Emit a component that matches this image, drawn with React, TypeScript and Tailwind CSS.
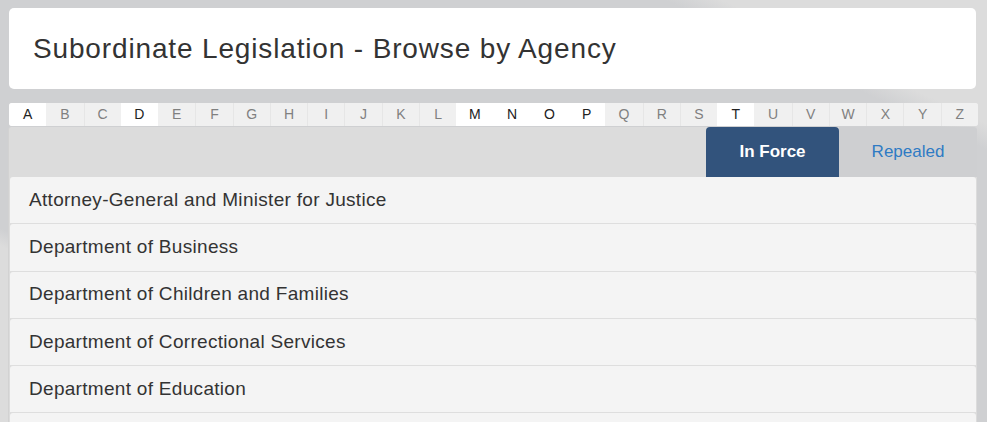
const letters = "ABCDEFGHIJKLMNOPQRSTUVWXYZ".split("");
const active = ["A", "D", "M", "N", "O", "P", "T"];

const agencies = [
  "Attorney-General and Minister for Justice",
  "Department of Business",
  "Department of Children and Families",
  "Department of Correctional Services",
  "Department of Education",
];

export default function App() {
  return (
    <div className="w-[987px] h-[422px] overflow-hidden bg-[linear-gradient(205deg,#dcdcdc_0%,#dcdcdc_14%,#cfd0d2_17%,#cfd0d2_78%,#dcdcdc_80%)] font-['Liberation_Sans',Arial,sans-serif] text-[#333]">
      <div className="pt-[8px] pl-[9px] pr-[9px]">
        <div className="w-[967px] h-[81px] bg-white rounded-[5px] flex items-center pl-[24px]">
          <h1 className="text-[28px] leading-none tracking-[0.85px] text-[#333]">
            Subordinate Legislation - Browse by Agency
          </h1>
        </div>

        <div className="mt-[14px] h-[23px] grid grid-cols-26 rounded-[3px] overflow-hidden bg-[#f0f0f0]">
          {letters.map((l, i) => {
            const on = active.includes(l);
            return (
              <div
                key={l}
                className={`flex items-center justify-center text-[14px] ${
                  on ? "bg-white text-[#222]" : "bg-[#f0f0f0] text-[#808080]"
                } ${i > 0 && !on && !active.includes(letters[i - 1]) ? "border-l border-[#e6e6e6]" : ""}`}
              >
                {l}
              </div>
            );
          })}
        </div>
      </div>

      <div className="ml-[8px] mt-[1px] w-[969px] bg-[#dcdcdc] border-l border-[#d2d2d2] rounded-t-[3px]">
        <div className="h-[50px] flex justify-end">
          <div className="w-[133px] h-full bg-[#32537c] rounded-t-[4px] flex items-center justify-center text-white font-bold text-[17px]">
            In Force
          </div>
          <div className="w-[138px] h-full bg-[#cecfd1] rounded-tr-[3px] flex items-center justify-center text-[#2e7bc4] text-[17px]">
            Repealed
          </div>
        </div>
        <div className="pl-[1px] pr-[1px]">
          {agencies.map((a) => (
            <div
              key={a}
              className="h-[47.3px] bg-[#f4f4f4] border-b border-[#dedede] rounded-t-[3px] flex items-center pl-[19px] text-[19px] tracking-[0.3px] text-[#333]"
            >
              {a}
            </div>
          ))}
          <div className="h-[47.3px] bg-[#f4f4f4] border-b border-[#dedede] rounded-t-[3px]" />
        </div>
      </div>
    </div>
  );
}
